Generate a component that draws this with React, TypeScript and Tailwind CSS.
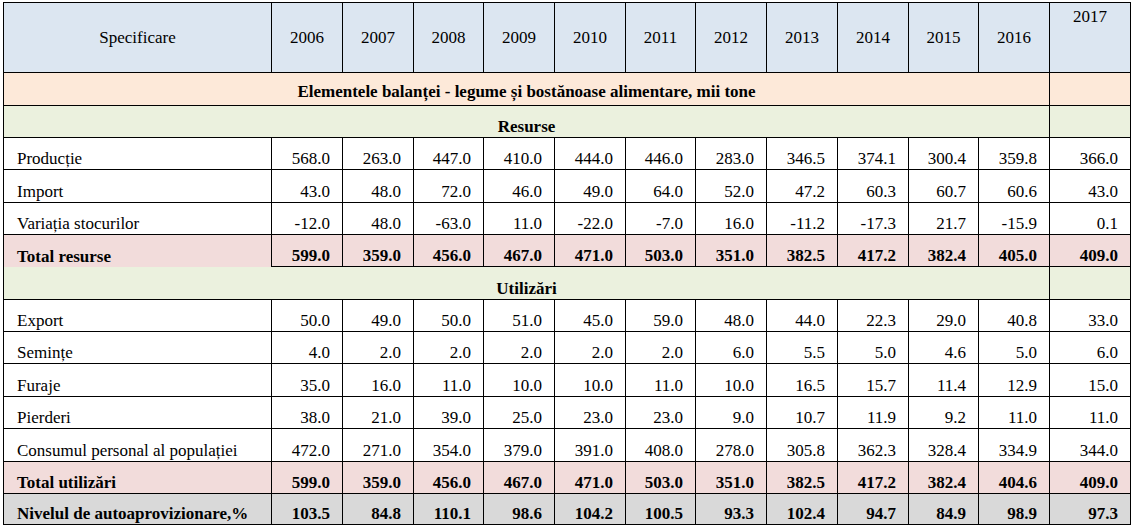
const years = ['2006', '2007', '2008', '2009', '2010', '2011', '2012', '2013', '2014', '2015', '2016']

type Row = { label: string; values: string[]; kind?: 'total' | 'level'; h: string }

const resurse: Row[] = [
  { label: 'Producție', h: 'h-[32px]', values: ['568.0', '263.0', '447.0', '410.0', '444.0', '446.0', '283.0', '346.5', '374.1', '300.4', '359.8', '366.0'] },
  { label: 'Import', h: 'h-[33px]', values: ['43.0', '48.0', '72.0', '46.0', '49.0', '64.0', '52.0', '47.2', '60.3', '60.7', '60.6', '43.0'] },
  { label: 'Variația stocurilor', h: 'h-[32px]', values: ['-12.0', '48.0', '-63.0', '11.0', '-22.0', '-7.0', '16.0', '-11.2', '-17.3', '21.7', '-15.9', '0.1'] },
  { label: 'Total resurse', h: 'h-[32px]', kind: 'total', values: ['599.0', '359.0', '456.0', '467.0', '471.0', '503.0', '351.0', '382.5', '417.2', '382.4', '405.0', '409.0'] },
]

const utilizari: Row[] = [
  { label: 'Export', h: 'h-[32px]', values: ['50.0', '49.0', '50.0', '51.0', '45.0', '59.0', '48.0', '44.0', '22.3', '29.0', '40.8', '33.0'] },
  { label: 'Semințe', h: 'h-[32px]', values: ['4.0', '2.0', '2.0', '2.0', '2.0', '2.0', '6.0', '5.5', '5.0', '4.6', '5.0', '6.0'] },
  { label: 'Furaje', h: 'h-[33px]', values: ['35.0', '16.0', '11.0', '10.0', '10.0', '11.0', '10.0', '16.5', '15.7', '11.4', '12.9', '15.0'] },
  { label: 'Pierderi', h: 'h-[32px]', values: ['38.0', '21.0', '39.0', '25.0', '23.0', '23.0', '9.0', '10.7', '11.9', '9.2', '11.0', '11.0'] },
  { label: 'Consumul personal al populației', h: 'h-[33px]', values: ['472.0', '271.0', '354.0', '379.0', '391.0', '408.0', '278.0', '305.8', '362.3', '328.4', '334.9', '344.0'] },
  { label: 'Total utilizări', h: 'h-[32px]', kind: 'total', values: ['599.0', '359.0', '456.0', '467.0', '471.0', '503.0', '351.0', '382.5', '417.2', '382.4', '404.6', '409.0'] },
  { label: 'Nivelul de autoaprovizionare,%', h: 'h-[31px]', kind: 'level', values: ['103.5', '84.8', '110.1', '98.6', '104.2', '100.5', '93.3', '102.4', '94.7', '84.9', '98.9', '97.3'] },
]

const cell = 'border border-black p-0 align-bottom leading-[normal] text-[17px]'

function DataRow({ row, noBottomLabel }: { row: Row; noBottomLabel?: boolean }) {
  const bg = row.kind === 'total' ? 'bg-[#f2dcdb] font-bold' : row.kind === 'level' ? 'bg-[#d9d9d9] font-bold' : 'bg-white'
  return (
    <tr className={`${row.h} ${bg}`}>
      <td className={`${cell} pl-[13px] text-left ${noBottomLabel ? 'border-b-0' : ''}`}>{row.label}</td>
      {row.values.map((v, i) => (
        <td key={i} className={`${cell} pr-[12px] text-right`}>
          {v}
        </td>
      ))}
    </tr>
  )
}

function SectionRow({ title, h, noTop }: { title: string; h: string; noTop?: boolean }) {
  return (
    <tr className={`${h} bg-[#ebf1de]`}>
      <td colSpan={12} className={`${cell} text-center font-bold ${noTop ? 'border-t-0' : ''}`}>
        {title}
      </td>
      <td className={cell}></td>
    </tr>
  )
}

export default function App() {
  return (
    <div className="min-h-[528px] w-[1136px] bg-white pt-[2px] pl-[3px] font-serif">
      <table className="w-[1127px] table-fixed border-collapse font-[family-name:Liberation_Serif,serif] text-[17px] text-black">
        <colgroup>
          <col className="w-[268px]" />
          {[71, 71, 70, 71, 71, 70, 71, 71, 71, 70, 71].map((w, i) => (
            <col key={i} style={{ width: w }} />
          ))}
          <col className="w-[81px]" />
        </colgroup>
        <tbody>
          <tr className="h-[70px] bg-[#dce6f1]">
            <td className={`${cell} align-middle text-center`}>Specificare</td>
            {years.map((y) => (
              <td key={y} className={`${cell} align-middle text-center`}>
                {y}
              </td>
            ))}
            <td className={`${cell} pt-[4px] align-top text-center`}>2017</td>
          </tr>
          <tr className="h-[33px] bg-[#fde9d9]">
            <td colSpan={12} className={`${cell} pb-[3px] text-center font-bold`}>
              Elementele balanței - legume și bostănoase alimentare, mii tone
            </td>
            <td className={cell}></td>
          </tr>
          <SectionRow title="Resurse" h="h-[32px]" />
          {resurse.map((r) => (
            <DataRow key={r.label} row={r} noBottomLabel={r.kind === 'total'} />
          ))}
          <SectionRow title="Utilizări" h="h-[33px]" noTop />
          {utilizari.map((r) => (
            <DataRow key={r.label} row={r} />
          ))}
        </tbody>
      </table>
    </div>
  )
}
